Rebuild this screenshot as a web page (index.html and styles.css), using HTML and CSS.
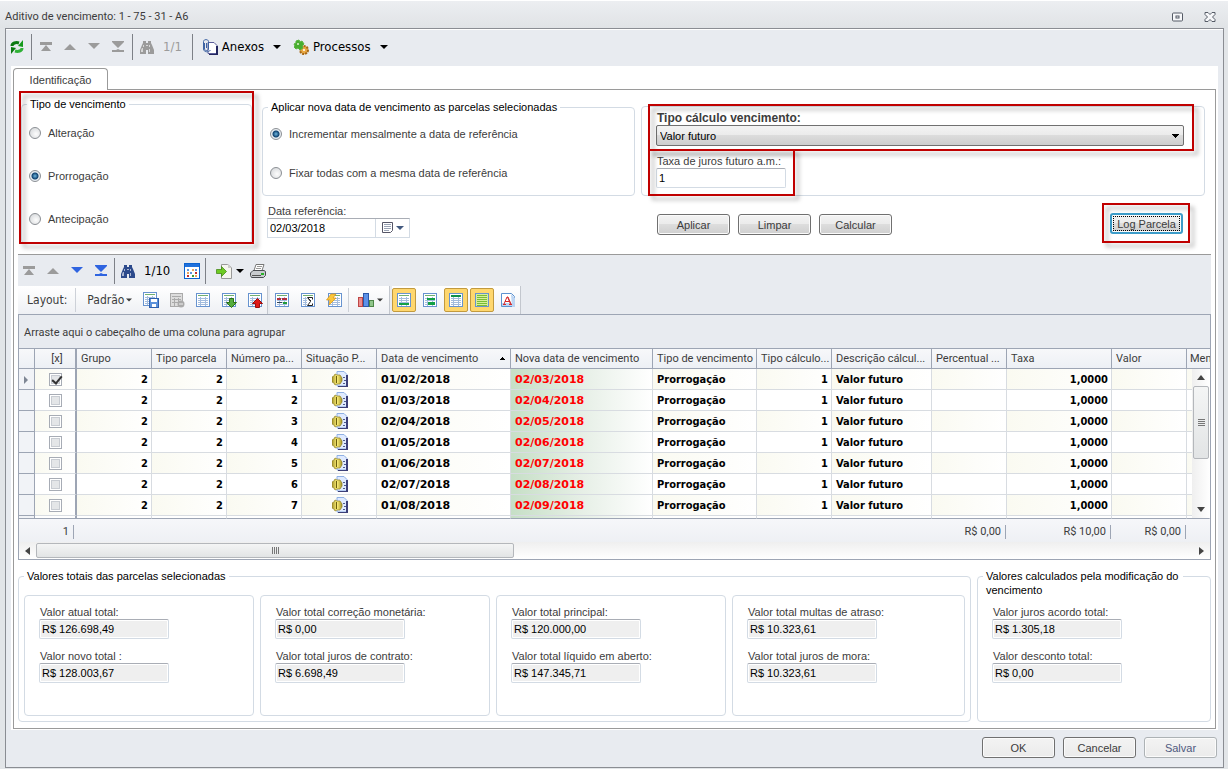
FILE: index.html
```html
<!DOCTYPE html>
<html lang="pt-BR">
<head>
  <meta charset="UTF-8">
  <meta name="viewport" content="width=device-width, initial-scale=1.0">
  <title>Aditivo de vencimento</title>
  <link rel="stylesheet" href="styles.css">
</head>
<body>

<!-- Ícones -->
<svg class="sprite" aria-hidden="true">
  <defs>
    <linearGradient id="goldGrad" x1="0" y1="0" x2="1" y2="0"><stop offset="0" stop-color="#a3922a"/><stop offset=".5" stop-color="#fff27a"/><stop offset="1" stop-color="#a3922a"/></linearGradient>
  </defs>
  <symbol id="i-first" viewBox="0 0 16 16"><path fill="currentColor" d="M2 3h12v3H2zM8 6l5 6H3z"/></symbol>
  <symbol id="i-up" viewBox="0 0 16 16"><path fill="currentColor" d="M8 5l6 6H2z"/></symbol>
  <symbol id="i-down" viewBox="0 0 16 16"><path fill="currentColor" d="M2 4h12L8 10z"/></symbol>
  <symbol id="i-last" viewBox="0 0 16 16"><path fill="currentColor" d="M2 2h12v1l-6 6-6-6zM2 11h4l2-1 2 1h4v2H2z"/></symbol>
  <symbol id="i-caret" viewBox="0 0 8 8"><path fill="currentColor" d="M0 2h8L4 6z"/></symbol>
  <symbol id="i-find" viewBox="0 0 16 16">
    <path fill="currentColor" d="M4 2h3v2h2V2h3v2l1 2 2 5v4H9v-4H7v4H1v-4l2-5 1-2z"/>
    <path fill="#fff" opacity=".6" d="M4 6h1v2H4zM3 9h1v4H2v-2zM10 6h1v2h-1zM10 10h1v3h-1zM7 6h2v1H7z"/>
  </symbol>
  <symbol id="i-refresh" viewBox="0 0 16 16">
    <path fill="none" stroke="#0c7a12" stroke-width="3" d="M3 7c0-3 4-4 7-3"/><path fill="#159a1c" d="M9 7l5-6v7z"/>
    <path fill="none" stroke="#2fb136" stroke-width="3" d="M13 9c0 3-4 4-7 3"/><path fill="#0c7a12" d="M7 9l-5 6V8z"/>
  </symbol>
  <symbol id="i-attach" viewBox="0 0 16 16">
    <path fill="#fff" stroke="#5b5e9a" d="M6 3.500h6l3 3v8H6z"/><path fill="#23265f" d="M14 7h2v9H7v-1h7z"/>
    <path fill="none" stroke="#3f64a3" d="M2.500 4v6c0 2 4 2 4 0V2.500c0-2.500-5-2.500-5 0V10c0 3 5 4 7 1M4.500 4v5"/>
  </symbol>
  <symbol id="i-process" viewBox="0 0 16 16">
    <circle cx="11" cy="11" r="4" fill="#e9a843" stroke="#a76715" stroke-width="2" stroke-dasharray="2 1"/>
    <circle cx="11" cy="11" r="1" fill="#fff"/>
    <path fill="#47ad2f" stroke="#59b53d" d="M1 5l2-1 0-2 3-1 1 2 2-1 2 3-2 2 1 2-3 2-2-2-2 1-2-2 1-1z"/><circle cx="5" cy="5" r="1" fill="#dff6ce"/>
  </symbol>
  <symbol id="i-cols" viewBox="0 0 16 16">
    <rect x=".5" y=".5" width="15" height="15" fill="#fff" stroke="#0b62cf"/><path fill="#1f70dc" d="M1 1h14v3H1z"/>
    <path fill="#5c96de" d="M3 6h2v2H3zM11 6h2v2h-2zM6 9h2v2H6z"/><path fill="#e9a25d" d="M8 6h2v2H8zM3 9h2v2H3zM11 12h2v2h-2z"/><path fill="#3d9b35" d="M8 12h2v2H8z"/><path fill="#c12f2f" d="M3 12h2v2H3zM11 9h2v2h-2z"/>
  </symbol>
  <symbol id="i-export" viewBox="0 0 16 16">
    <path fill="#f6f6f0" stroke="#999" d="M5.500 1.500h6l4 3v11h-10z"/><path fill="#ccc" d="M12 1v4h4z"/>
    <path fill="#6ecb22" stroke="#39800d" stroke-width=".7" d="M.5 6.500h5V3.500l5 5-5 5v-3h-5z"/>
  </symbol>
  <symbol id="i-print" viewBox="0 0 16 16">
    <path fill="#fff" stroke="#777" d="M6 1.500l8 0-2 6H4z"/><path stroke="#999" d="M7 3.500h5M6 5.500h5"/>
    <path fill="#c9ccd0" stroke="#4a4d52" d="M3 7.500h11l1.500 1v4l-2 2h-12l-1-2V10z"/><path fill="#555" d="M2 12h9v1H2z"/><path fill="#29b329" d="M11 10h3v2h-3z"/>
  </symbol>
  <symbol id="i-sheet" viewBox="0 0 16 16">
    <rect x="1.500" y="1.500" width="13" height="13" fill="#fff" stroke="#6793cf"/><path stroke="#71b070" d="M3 3.500h10"/>
    <path stroke="#a3bcdd" fill="none" d="M3 6.500h10M3 8.500h10M3 10.500h10M3 12.500h10M5.500 5v9M10.500 5v9"/>
  </symbol>
  <symbol id="i-save" viewBox="0 0 16 16"><use href="#i-sheet" x="-1" y="-1"/><rect x="6.500" y="6.500" width="9" height="9" fill="#5c92dc" stroke="#2e5fae"/><path fill="#fff" d="M8 7h6v3H8zM9 12h4v3H9z"/></symbol>
  <symbol id="i-del" viewBox="0 0 16 16"><rect x="1.500" y="1.500" width="12" height="13" fill="#ddd" stroke="#aaa"/><path stroke="#aaa" d="M3 4.500h9M3 7.500h9M3 10.500h9M5.500 6v8M9.500 6v8"/><circle cx="12" cy="12" r="3.500" fill="#aaa"/><path stroke="#eee" d="M10 12h4"/></symbol>
  <symbol id="i-load" viewBox="0 0 16 16"><use href="#i-sheet"/><path fill="#55ad3d" stroke="#2b7018" d="M8.500 6.500h4v4h3l-5 5-5-5h3z"/></symbol>
  <symbol id="i-send" viewBox="0 0 16 16"><use href="#i-sheet"/><path fill="#e01919" stroke="#9b0c0c" d="M8.500 15.500h4v-4h3l-5-5-5 5h3z"/></symbol>
  <symbol id="i-cond" viewBox="0 0 16 16"><use href="#i-sheet"/><path stroke="#b22f3d" stroke-width="2" d="M3 7h4M8 7h5"/><path stroke="#219a39" stroke-width="2" d="M9 11h4"/><path stroke="#345" d="M3 10.500h5"/></symbol>
  <symbol id="i-sum" viewBox="0 0 16 16"><use href="#i-sheet"/><path fill="#fff" d="M7 6h6v7H7z"/><path fill="none" stroke="#222" d="M12.500 7.500v-2h-5l3 4-3 4h5v-2M8 6l3 3"/></symbol>
  <symbol id="i-flash" viewBox="0 0 16 16"><use href="#i-sheet" x="1"/><path fill="#fbc73d" stroke="#d89313" stroke-width=".7" d="M5 2h5L7 6h3l-7 7 1-5H.5z"/></symbol>
  <symbol id="i-chart" viewBox="0 0 16 16"><rect x=".5" y="5.500" width="4" height="9" fill="#ec8d8d" stroke="#bd4646"/><rect x="5.500" y="1.500" width="5" height="13" fill="#5d92e8" stroke="#2b58a8"/><rect x="11.500" y="8.500" width="4" height="6" fill="#8fc68b" stroke="#4c8547"/></symbol>
  <symbol id="i-foot" viewBox="0 0 16 16"><use href="#i-sheet"/><path fill="#12a045" d="M3 11h10v2H3z"/></symbol>
  <symbol id="i-group" viewBox="0 0 16 16"><use href="#i-sheet"/><path fill="#12a045" d="M5 6h8v2H5zM6 10h7v3H6z"/></symbol>
  <symbol id="i-head" viewBox="0 0 16 16"><use href="#i-sheet"/><path fill="#12904a" d="M3 3h10v2H3z"/></symbol>
  <symbol id="i-zebra" viewBox="0 0 16 16"><rect x="1.500" y="1.500" width="13" height="13" fill="#d7ee9b" stroke="#6793cf"/><path stroke="#78bd36" d="M3 3.500h10M3 5.500h10M3 7.500h10M3 9.500h10M3 11.500h10M3 13.500h10"/></symbol>
  <symbol id="i-font" viewBox="0 0 16 16"><path fill="#fff" stroke="#5d92cf" d="M1.500 1.500h10l3 3v10h-13z"/><path fill="#bcd4f2" d="M2 11h12v3H2zM11 2l4 4v9h-3z"/><path fill="none" stroke="#d62a2a" d="M4 12l3-7h1l3 7M7.500 5l3 7M5 9.500h5M3 12.500h3M9 12.500h3"/></symbol>
  <symbol id="i-status" viewBox="0 0 16 16">
    <path fill="#dfeaff" stroke="#8fb0e4" d="M5 .5h7l3 3V15H5z"/><path fill="#3c3f78" d="M14 4h2v12H6v-1h8z"/><path stroke="#4c5a8c" d="M11 6.500h2M12 9.500h2M11 12.500h2"/>
    <path fill="url(#goldGrad)" stroke="#8f7f22" stroke-width=".7" d="M0 6l2-1 1-2 2 1h3l2 3v3l-2 3H5l-2 1-1-2-2-1z"/><path stroke="#6a5d0c" d="M4.500 5v7"/>
  </symbol>
  <symbol id="i-cal" viewBox="0 0 12 12"><path fill="#fff" stroke="#556" d="M.5.500h10v8l-2 2h-8z"/><path stroke="#9aa3b5" d="M2 2.500h7M2 4.500h7M2 6.500h7M2 8.500h5"/></symbol>
</svg>

<div class="window">
  <header class="titlebar">
    <span class="title">Aditivo de vencimento: 1 - 75 - 31 - A6</span>
    <button class="win-btn" aria-label="Maximizar"><svg width="12" height="10"><rect x=".5" y="1" width="10" height="8" rx="1" fill="#f6f7f9" stroke="#555b66"/><rect x="4" y="4" width="3" height="2" fill="none" stroke="#555b66"/></svg></button>
    <button class="win-btn" aria-label="Fechar"><svg width="12" height="10"><path fill="#f6f7f9" stroke="#555b66" d="M1 .5h3l2 2 2-2h3v2L8.500 5 11 7.500v2H8l-2-2-2 2H1v-2L3.500 5 1 2.500z"/></svg></button>
  </header>

  <div class="frame">
    <div class="toolbar main-tools">
      <button class="tool" aria-label="Atualizar"><svg><use href="#i-refresh"/></svg></button>
      <span class="sep"></span>
      <button class="tool off" aria-label="Primeiro"><svg><use href="#i-first"/></svg></button>
      <button class="tool off" aria-label="Anterior"><svg><use href="#i-up"/></svg></button>
      <button class="tool off" aria-label="Próximo"><svg><use href="#i-down"/></svg></button>
      <button class="tool off" aria-label="Último"><svg><use href="#i-last"/></svg></button>
      <span class="sep"></span>
      <button class="tool off" aria-label="Localizar"><svg><use href="#i-find"/></svg></button>
      <span class="counter off">1/1</span>
      <span class="sep"></span>
      <button class="tool-text"><svg><use href="#i-attach"/></svg>Anexos<svg class="caret"><use href="#i-caret"/></svg></button>
      <button class="tool-text"><svg><use href="#i-process"/></svg>Processos<svg class="caret"><use href="#i-caret"/></svg></button>
    </div>

    <main class="page">
      <div class="tabs"><button class="tab">Identificação</button></div>
      <div class="panel">

        <div class="form">
          <div class="marked kind">
            <fieldset class="group">
              <legend>Tipo de vencimento</legend>
              <label class="radio"><input type="radio" name="tipo">Alteração</label>
              <label class="radio"><input type="radio" name="tipo" checked>Prorrogação</label>
              <label class="radio"><input type="radio" name="tipo">Antecipação</label>
            </fieldset>
            <span class="mark"></span>
          </div>

          <div class="apply">
            <fieldset class="group">
              <legend>Aplicar nova data de vencimento as parcelas selecionadas</legend>
              <label class="radio"><input type="radio" name="aplicar" checked>Incrementar mensalmente a data de referência</label>
              <label class="radio"><input type="radio" name="aplicar">Fixar todas com a mesma data de referência</label>
            </fieldset>
            <div class="date">
              <label for="dataRef">Data referência:</label>
              <div class="date-box">
                <input id="dataRef" type="text" value="02/03/2018">
                <button class="date-btn" aria-label="Calendário"><svg class="cal"><use href="#i-cal"/></svg><svg class="caret"><use href="#i-caret"/></svg></button>
              </div>
            </div>
          </div>

          <div class="calc">
            <div class="group calc-box">
              <div class="marked calc-type">
                <label for="tipoCalc">Tipo cálculo vencimento:</label>
                <select id="tipoCalc"><option>Valor futuro</option></select>
                <span class="mark"></span>
              </div>
              <div class="marked calc-rate">
                <label for="taxa">Taxa de juros futuro a.m.:</label>
                <input id="taxa" class="field" type="text" value="1">
                <span class="mark"></span>
              </div>
            </div>
            <div class="actions">
              <button class="btn">Aplicar</button>
              <button class="btn">Limpar</button>
              <button class="btn">Calcular</button>
              <div class="marked log">
                <button class="btn focused">Log Parcela</button>
                <span class="mark"></span>
              </div>
            </div>
          </div>
        </div>

        <section class="grid">
          <div class="toolbar nav-tools">
            <button class="tool off" aria-label="Primeiro"><svg><use href="#i-first"/></svg></button>
            <button class="tool off" aria-label="Anterior"><svg><use href="#i-up"/></svg></button>
            <button class="tool blue" aria-label="Próximo"><svg><use href="#i-down"/></svg></button>
            <button class="tool blue" aria-label="Último"><svg><use href="#i-last"/></svg></button>
            <span class="sep"></span>
            <button class="tool navy" aria-label="Localizar"><svg><use href="#i-find"/></svg></button>
            <span class="counter">1/10</span>
            <button class="tool" aria-label="Colunas"><svg><use href="#i-cols"/></svg></button>
            <span class="sep"></span>
            <button class="tool-drop" aria-label="Exportar"><svg><use href="#i-export"/></svg><svg class="caret"><use href="#i-caret"/></svg></button>
            <button class="tool" aria-label="Imprimir"><svg><use href="#i-print"/></svg></button>
          </div>

          <div class="layout-tools">
            <div class="strip">
              <span class="strip-label">Layout:</span>
              <span class="thin-sep"></span>
              <button class="strip-drop">Padrão<svg class="caret"><use href="#i-caret"/></svg></button>
              <button class="pick" aria-label="Salvar layout"><svg><use href="#i-save"/></svg></button>
              <button class="pick" aria-label="Excluir layout"><svg><use href="#i-del"/></svg></button>
              <button class="pick" aria-label="Layout original"><svg><use href="#i-sheet"/></svg></button>
              <button class="pick" aria-label="Importar layout"><svg><use href="#i-load"/></svg></button>
              <button class="pick" aria-label="Exportar layout"><svg><use href="#i-send"/></svg></button>
            </div>
            <div class="strip">
              <button class="pick" aria-label="Formatação condicional"><svg><use href="#i-cond"/></svg></button>
              <button class="pick" aria-label="Sumário"><svg><use href="#i-sum"/></svg></button>
              <button class="pick" aria-label="Filtro rápido"><svg><use href="#i-flash"/></svg></button>
              <span class="thin-sep"></span>
              <button class="pick wide" aria-label="Gráfico"><svg><use href="#i-chart"/></svg><svg class="caret"><use href="#i-caret"/></svg></button>
            </div>
            <div class="strip">
              <button class="pick on" aria-label="Rodapé"><svg><use href="#i-foot"/></svg></button>
              <button class="pick" aria-label="Rodapé de grupo"><svg><use href="#i-group"/></svg></button>
              <button class="pick on" aria-label="Cabeçalho"><svg><use href="#i-head"/></svg></button>
              <button class="pick on" aria-label="Zebrado"><svg><use href="#i-zebra"/></svg></button>
              <button class="pick" aria-label="Fonte"><svg><use href="#i-font"/></svg></button>
            </div>
          </div>

          <div class="grid-box">
            <div class="group-hint">Arraste aqui o cabeçalho de uma coluna para agrupar</div>
            <div class="grid-view">
              <table>
                <colgroup>
                  <col class="w-ind"><col class="w-chk"><col class="w75"><col class="w75"><col class="w75"><col class="w75">
                  <col class="w-date"><col class="w-new"><col class="w-tipo"><col class="w75"><col class="w-desc"><col class="w75">
                  <col class="w-taxa"><col class="w75"><col>
                </colgroup>
                <thead>
                  <tr>
                    <th></th><th class="c">[x]</th><th>Grupo</th><th>Tipo parcela</th><th>Número pa...</th><th>Situação P...</th>
                    <th class="sorted">Data de vencimento</th><th>Nova data de vencimento</th><th>Tipo de vencimento</th><th>Tipo cálculo...</th>
                    <th>Descrição cálcul...</th><th>Percentual ...</th><th>Taxa</th><th>Valor</th><th class="cut">Mem</th>
                  </tr>
                </thead>
                <tbody>
                  <tr><td class="ind current"></td><td class="c"><input type="checkbox" aria-label="Selecionar" checked></td><td class="n">2</td><td class="n">2</td><td class="n">1</td><td class="c"><svg><use href="#i-status"/></svg></td><td class="date-cell">01/02/2018</td><td class="date-cell new">02/03/2018</td><td>Prorrogação</td><td class="n">1</td><td>Valor futuro</td><td></td><td class="n">1,0000</td><td></td><td></td></tr>
                  <tr><td class="ind"></td><td class="c"><input type="checkbox" aria-label="Selecionar"></td><td class="n">2</td><td class="n">2</td><td class="n">2</td><td class="c"><svg><use href="#i-status"/></svg></td><td class="date-cell">01/03/2018</td><td class="date-cell new">02/04/2018</td><td>Prorrogação</td><td class="n">1</td><td>Valor futuro</td><td></td><td class="n">1,0000</td><td></td><td></td></tr>
                  <tr><td class="ind"></td><td class="c"><input type="checkbox" aria-label="Selecionar"></td><td class="n">2</td><td class="n">2</td><td class="n">3</td><td class="c"><svg><use href="#i-status"/></svg></td><td class="date-cell">02/04/2018</td><td class="date-cell new">02/05/2018</td><td>Prorrogação</td><td class="n">1</td><td>Valor futuro</td><td></td><td class="n">1,0000</td><td></td><td></td></tr>
                  <tr><td class="ind"></td><td class="c"><input type="checkbox" aria-label="Selecionar"></td><td class="n">2</td><td class="n">2</td><td class="n">4</td><td class="c"><svg><use href="#i-status"/></svg></td><td class="date-cell">01/05/2018</td><td class="date-cell new">02/06/2018</td><td>Prorrogação</td><td class="n">1</td><td>Valor futuro</td><td></td><td class="n">1,0000</td><td></td><td></td></tr>
                  <tr><td class="ind"></td><td class="c"><input type="checkbox" aria-label="Selecionar"></td><td class="n">2</td><td class="n">2</td><td class="n">5</td><td class="c"><svg><use href="#i-status"/></svg></td><td class="date-cell">01/06/2018</td><td class="date-cell new">02/07/2018</td><td>Prorrogação</td><td class="n">1</td><td>Valor futuro</td><td></td><td class="n">1,0000</td><td></td><td></td></tr>
                  <tr><td class="ind"></td><td class="c"><input type="checkbox" aria-label="Selecionar"></td><td class="n">2</td><td class="n">2</td><td class="n">6</td><td class="c"><svg><use href="#i-status"/></svg></td><td class="date-cell">02/07/2018</td><td class="date-cell new">02/08/2018</td><td>Prorrogação</td><td class="n">1</td><td>Valor futuro</td><td></td><td class="n">1,0000</td><td></td><td></td></tr>
                  <tr><td class="ind"></td><td class="c"><input type="checkbox" aria-label="Selecionar"></td><td class="n">2</td><td class="n">2</td><td class="n">7</td><td class="c"><svg><use href="#i-status"/></svg></td><td class="date-cell">01/08/2018</td><td class="date-cell new">02/09/2018</td><td>Prorrogação</td><td class="n">1</td><td>Valor futuro</td><td></td><td class="n">1,0000</td><td></td><td></td></tr>
                  <tr class="peek"><td class="ind"></td><td></td><td></td><td></td><td></td><td></td><td></td><td class="new"></td><td></td><td></td><td></td><td></td><td></td><td></td><td></td></tr>
                </tbody>
                <tfoot>
                  <tr><td></td><td class="count"><span class="total">1</span></td><td colspan="9"></td><td><span class="total">R$ 0,00</span></td><td><span class="total">R$ 10,00</span></td><td><span class="total">R$ 0,00</span></td><td></td></tr>
                </tfoot>
              </table>
              <div class="vscroll">
                <span class="arrow up"></span><span class="thumb"></span><span class="arrow down"></span>
              </div>
            </div>
            <div class="hscroll">
              <span class="arrow left"></span><span class="thumb"></span><span class="arrow right"></span>
            </div>
          </div>
        </section>

        <div class="totals">
          <fieldset class="group selected">
            <legend>Valores totais das parcelas selecionadas</legend>
            <div class="cards">
              <div class="group card">
                <label for="v1">Valor atual total:</label><input id="v1" class="field" type="text" value="R$ 126.698,49" readonly>
                <label for="v2">Valor novo total :</label><input id="v2" class="field" type="text" value="R$ 128.003,67" readonly>
              </div>
              <div class="group card">
                <label for="v3">Valor total correção monetária:</label><input id="v3" class="field" type="text" value="R$ 0,00" readonly>
                <label for="v4">Valor total juros de contrato:</label><input id="v4" class="field" type="text" value="R$ 6.698,49" readonly>
              </div>
              <div class="group card">
                <label for="v5">Valor total principal:</label><input id="v5" class="field" type="text" value="R$ 120.000,00" readonly>
                <label for="v6">Valor total líquido em aberto:</label><input id="v6" class="field" type="text" value="R$ 147.345,71" readonly>
              </div>
              <div class="group card">
                <label for="v7">Valor total multas de atraso:</label><input id="v7" class="field" type="text" value="R$ 10.323,61" readonly>
                <label for="v8">Valor total juros de mora:</label><input id="v8" class="field" type="text" value="R$ 10.323,61" readonly>
              </div>
            </div>
          </fieldset>
          <fieldset class="group computed">
            <legend>Valores calculados pela modificação do vencimento</legend>
            <div class="card">
              <label for="v9">Valor juros acordo total:</label><input id="v9" class="field" type="text" value="R$ 1.305,18" readonly>
              <label for="v10">Valor desconto total:</label><input id="v10" class="field" type="text" value="R$ 0,00" readonly>
            </div>
          </fieldset>
        </div>

      </div>
    </main>

    <footer class="footer">
      <button class="btn">OK</button>
      <button class="btn">Cancelar</button>
      <button class="btn" disabled>Salvar</button>
    </footer>
  </div>
</div>

</body>
</html>
```
FILE: styles.css
```css
* {
  box-sizing: border-box;
}
body {
  margin: 0;
  font-family: "Liberation Sans", Arial, sans-serif;
  font-size: 11px;
  line-height: 14px;
  color: #3c3c3c;
  background: #e2e5e8;
}
button, input, select {
  font: inherit;
  color: inherit;
}
button {
  padding: 0;
  border: 0;
  background: none;
}
svg {
  width: 16px;
  height: 16px;
  flex: none;
}
svg.caret {
  width: 8px;
  height: 8px;
}
.sprite {
  position: absolute;
  width: 0;
  height: 0;
}

/* Window */
.window {
  min-height: 100vh;
  display: flex;
  flex-direction: column;
  padding: 0 4px 1px 5px;
}
.titlebar {
  display: flex;
  align-items: center;
  gap: 20px;
  height: 28px;
  margin: 0 -4px 0 -5px;
  padding: 4px 12px 0 5px;
  border-top: 1px solid #fff;
  background: linear-gradient(#eceef1, #e0e3e6);
  font-family: Roboto, sans-serif;
}
.title {
  flex: 1;
}
.win-btn {
  height: 10px;
  line-height: 0;
}
.win-btn svg {
  width: 12px;
  height: 10px;
}
.frame {
  flex: 1;
  display: flex;
  flex-direction: column;
  padding: 0 5px;
  border: 1px solid #8a8d93;
  background: #e8ebf0;
}

/* Toolbars */
.toolbar {
  display: flex;
  align-items: center;
  font-family: "DejaVu Sans Condensed", "DejaVu Sans", sans-serif;
  font-size: 13px;
  color: #000;
}
.main-tools {
  height: 37px;
  margin: 0 -5px;
  padding: 0 0 3px 1px;
  border-top: 1px solid #fff;
}
.nav-tools {
  height: 31px;
  margin-left: -1px;
}
.tool {
  width: 24px;
  height: 24px;
  display: flex;
  align-items: center;
  justify-content: center;
}
.main-tools .tool:first-child {
  width: 22px;
  padding-right: 2px;
}
.off {
  color: #9b9b9b;
}
.blue {
  color: #2f64e0;
}
.navy {
  color: #2c4a8c;
}
.sep {
  width: 1px;
  height: 26px;
  margin: 0 1px;
  background: #7d8087;
}
.main-tools .sep {
  margin: 0 2px;
}
.counter {
  padding: 0 8px 0 4px;
}
.nav-tools .counter {
  padding-right: 10px;
}
.tool-text, .tool-drop {
  display: flex;
  align-items: center;
  gap: 4px;
  height: 24px;
  padding: 0 5px 0 7px;
}
.tool-drop {
  padding: 0 2px 0 9px;
}
.tool-text .caret {
  margin-left: 5px;
}
.layout-tools {
  display: flex;
  gap: 2px;
  height: 28px;
  font-family: "DejaVu Sans Condensed", "DejaVu Sans", sans-serif;
  font-size: 12px;
}
.strip {
  display: flex;
  align-items: center;
  gap: 2px;
  background: linear-gradient(#fff, #eef0f4);
  border-right: 1px solid #c3c7ce;
}
.strip-label {
  padding: 0 6px 0 9px;
}
.strip-drop {
  display: flex;
  align-items: center;
  gap: 2px;
  padding: 0 5px 0 8px;
}
.strip-drop .caret {
  width: 6px;
}
.thin-sep {
  width: 1px;
  height: 24px;
  margin-right: 1px;
  background: #cdd1d8;
}
.pick {
  width: 24px;
  height: 24px;
  display: flex;
  align-items: center;
  justify-content: center;
  border: 1px solid transparent;
  border-radius: 2px;
}
.pick.wide {
  width: 37px;
}
.pick.wide .caret {
  width: 6px;
  margin-left: 3px;
}
.pick.on {
  border-color: #c29a3e;
  background: #ffd76e;
}

/* Page and tab */
.page {
  padding: 2px 2px 1px;
  background: #fff;
}
.tabs {
  display: flex;
}
.tab {
  position: relative;
  height: 22px;
  width: 95px;
  margin-bottom: -1px;
  border: 1px solid #9a9a9a;
  border-bottom: 0;
  border-radius: 4px 4px 0 0;
  background: #fff;
}
.panel {
  padding: 0 4px 6px;
  border: 1px solid #9a9a9a;
}

/* Group boxes */
.group {
  min-width: 0;
  margin: 0;
  padding: 0;
  border: 1px solid #d3dbe4;
  border-radius: 4px;
}
legend {
  margin-left: 5px;
  padding: 0 3px;
  color: #000;
}
.radio {
  display: flex;
  align-items: center;
  gap: 7px;
}
.radio input {
  appearance: none;
  width: 12px;
  height: 12px;
  margin: 0;
  border: 1px solid #8b8f94;
  border-radius: 50%;
  background: radial-gradient(circle at 60% 60%, #fdfdfd, #cfd2d5);
}
.radio input:checked {
  background: radial-gradient(circle, #6fb7e0 0, #0f4270 3px, #e8edf2 4px);
}

/* Red outlines round the highlighted areas */
.marked {
  position: relative;
}
.mark {
  position: absolute;
  inset: 0;
  border: 2px solid #c00000;
  filter: drop-shadow(4px 4px 2px rgba(0, 0, 0, .3));
  pointer-events: none;
}

/* Form */
.form {
  display: flex;
  height: 164px;
  padding-left: 1px;
}
.kind {
  width: 235px;
  margin-right: 8px;
}
.kind .group {
  height: 147px;
  margin: 7px 2px 0;
}
.kind .radio {
  margin: 0 0 29px 7px;
}
.kind legend + .radio {
  margin-top: 15px;
}
.kind .mark {
  inset: 1px 0 10px;
}
.apply {
  width: 373px;
  margin-right: 6px;
}
.apply .group {
  height: 96px;
  margin-top: 10px;
}
.apply .radio {
  margin: 0 0 25px 7px;
}
.apply legend + .radio {
  margin-top: 13px;
}
.date {
  padding: 8px 0 0 5px;
}
.date label {
  display: block;
  padding-left: 1px;
}
.date-box {
  display: flex;
  width: 143px;
  height: 20px;
  border: 1px solid #d3dbe4;
  border-top-color: #a9adb5;
}
.date-box input {
  width: 108px;
  padding: 0 2px;
  border: 0;
  border-right: 1px solid #d3dbe4;
  color: #000;
}
.date-btn {
  flex: 1;
  display: flex;
  align-items: center;
  justify-content: center;
  gap: 2px;
  color: #42597f;
}
.date-btn .cal {
  width: 12px;
  height: 12px;
}
.calc {
  flex: 1;
  padding-right: 6px;
}
.calc-box {
  height: 90px;
  margin-top: 16px;
  padding-left: 6px;
}
.calc-type {
  height: 45px;
  margin: -3px 10px 0 0;
  padding: 7px 10px 0 8px;
}
.calc-type label {
  display: block;
  padding-left: 1px;
  font-size: 12px;
  font-weight: bold;
}
.calc-type .mark {
  bottom: -2px;
}
select {
  appearance: none;
  display: block;
  width: 100%;
  height: 21px;
  padding: 0 3px;
  border: 1px solid #707070;
  border-radius: 2px;
  color: #000;
  background:
    linear-gradient(to right, #000 0 0) right 4px top 8px / 7px 1px no-repeat,
    linear-gradient(to right, #000 0 0) right 5px top 9px / 5px 1px no-repeat,
    linear-gradient(to right, #000 0 0) right 6px top 10px / 3px 1px no-repeat,
    linear-gradient(to right, #000 0 0) right 7px top 11px / 1px 1px no-repeat,
    linear-gradient(#f3f3f3, #ebebeb 50%, #dcdcdc 50%, #cdcdcd);
}
.calc-rate {
  width: 147px;
  height: 47px;
  padding: 5px 8px 0;
}
.calc-rate label {
  display: block;
  padding-left: 1px;
}
.field {
  display: block;
  width: 130px;
  height: 20px;
  padding: 0 2px;
  border: 1px solid #d3dbe4;
  border-top-color: #a9adb5;
  border-radius: 2px;
  color: #000;
}
.field[readonly] {
  background: #efefef;
  box-shadow: inset 0 0 0 1px #fff;
}
.actions {
  display: flex;
  align-items: flex-start;
  gap: 8px;
  padding: 18px 22px 0 16px;
}
.btn {
  width: 73px;
  height: 21px;
  border: 1px solid #707070;
  border-radius: 3px;
  background: linear-gradient(#f3f3f3, #ebebeb 50%, #dddddd 50%, #cfcfcf);
  box-shadow: inset 0 0 0 1px #fbfbfb;
}
.btn.focused {
  border: 2px solid #3c9cc9;
  outline: 1px dotted #000;
  outline-offset: -4px;
}
.footer .btn {
  background: linear-gradient(#f3f3f3, #ebebeb);
}
.btn:disabled {
  border-color: #adb2b5;
  color: #4f5a80;
}
.log {
  margin: -1px 0 0 auto;
}
.log .btn {
  display: block;
}
.log .mark {
  inset: -10px -7px -9px -8px;
}

/* Data grid */
.grid {
  border-top: 1px solid #9a9a9a;
  background: #e8ebf0;
}
.grid-box {
  border: 1px solid #9da5b4;
  font-family: Roboto, sans-serif;
}
.group-hint {
  padding: 11px 5px 8px;
}
.grid-view {
  position: relative;
}
table {
  width: 100%;
  table-layout: fixed;
  border-collapse: separate;
  border-spacing: 0;
}
.w-ind { width: 16px; }
.w-chk { width: 42px; }
.w75 { width: 75px; }
.w-date { width: 134px; }
.w-new { width: 142px; }
.w-tipo { width: 104px; }
.w-desc { width: 100px; }
.w-taxa { width: 105px; }
th, td {
  padding: 0 3px 0 4px;
  white-space: nowrap;
  text-align: left;
}
th {
  height: 21px;
  padding-right: 0;
  border: solid #9da5b4;
  border-width: 1px 1px 1px 0;
  background: linear-gradient(#f7f8fa, #edf0f5);
  font-weight: normal;
}
th.cut {
  padding-left: 3px;
  border-right: 0;
  overflow: hidden;
}
.sorted {
  background:
    conic-gradient(from 135deg at 50% 0, #000 90deg, transparent 0) right 5px center / 6px 3px no-repeat,
    linear-gradient(#f7f8fa, #edf0f5);
}
tbody td {
  height: 21px;
  padding-top: 2px;
  border: solid #d8dce1;
  border-width: 0 1px 1px 0;
  background: #fff;
  color: #000;
  font-family: "DejaVu Sans Condensed", "DejaVu Sans", sans-serif;
  font-weight: bold;
}
tbody td.date-cell {
  font-family: "DejaVu Sans", sans-serif;
}
tbody tr:nth-child(odd) td {
  background: linear-gradient(to right, #fafaf1, #fff);
}
tbody td.ind, tbody tr:nth-child(odd) td.ind {
  border-color: #9da5b4;
  background: #f1f3f7;
}
th:nth-child(2), tbody td:nth-child(2) {
  border-right: 2px solid #9da5b4;
}
.current::before {
  content: "";
  display: block;
  width: 4px;
  border: solid transparent;
  border-width: 4px 0 4px 4px;
  border-left-color: #7e8694;
  margin-left: 1px;
}
tbody td.new, tbody tr:nth-child(odd) td.new {
  color: #f00;
  background: linear-gradient(to right, #c6dfc6, #e6efe6 50%, #fff);
}
td.n {
  text-align: right;
}
td.c, th.c {
  padding-top: 0;
  text-align: center;
}
td svg, td input {
  display: block;
  margin: 0 auto;
}
td input {
  appearance: none;
  width: 13px;
  height: 13px;
  border: 1px solid #a7acb5;
  background: #e4e6e8;
  box-shadow: inset 0 0 0 1px #fff, inset 0 0 0 2px #c8ccd2;
}
td input:checked::before {
  content: "";
  display: block;
  width: 4px;
  height: 8px;
  margin: 0 0 0 4px;
  border: solid #333;
  border-width: 0 2px 2px 0;
  transform: rotate(40deg);
}
tbody tr.peek td, tbody tr.peek td.new {
  height: 3px;
  padding: 0;
  border-bottom-color: #9da5b4;
}
tfoot td {
  height: 23px;
  padding: 2px 1px 0 0;
  background: linear-gradient(#f6f7fa, #eef0f4);
  text-align: right;
}
tfoot td.count {
  padding-right: 3px;
}
.total {
  display: inline-block;
  padding-right: 4px;
  border-right: 1px solid #9da5b4;
}
.vscroll {
  position: absolute;
  top: 21px;
  right: 0;
  bottom: 24px;
  width: 18px;
  padding: 6px 1px;
  display: flex;
  flex-direction: column;
  align-items: center;
  background: linear-gradient(to right, #efefef, #fff);
}
.thumb {
  display: flex;
  align-items: center;
  justify-content: center;
  border: 1px solid #b4b7bb;
  border-radius: 2px;
  background: linear-gradient(#f4f5f5, #e2e4e5);
}
.vscroll .thumb {
  width: 16px;
  height: 73px;
  margin: 6px 0 auto;
}
.thumb::before {
  content: "";
}
.vscroll .thumb::before {
  width: 7px;
  height: 7px;
  background: repeating-linear-gradient(#777 0 1px, transparent 1px 2px);
}
.hscroll {
  display: flex;
  align-items: center;
  height: 17px;
  padding: 0 6px;
  background: linear-gradient(#efefef, #fff);
}
.hscroll .thumb {
  width: 478px;
  height: 15px;
  margin: 0 auto 0 6px;
}
.hscroll .thumb::before {
  width: 7px;
  height: 7px;
  background: repeating-linear-gradient(to right, #777 0 1px, transparent 1px 2px);
}
.arrow {
  border: 4px solid transparent;
}
.arrow.up {
  border-top: 0;
  border-bottom: 5px solid #444;
}
.arrow.down {
  border-bottom: 0;
  border-top: 5px solid #444;
}
.arrow.left {
  border-left: 0;
  border-right: 5px solid #444;
}
.arrow.right {
  border-right: 0;
  border-left: 5px solid #444;
}

/* Totals */
.totals {
  display: flex;
  gap: 6px;
  padding-top: 9px;
}
.selected {
  flex: 1;
}
.cards {
  display: grid;
  grid-template-columns: repeat(3, 1fr) 233px;
  gap: 6px;
  padding: 12px 5px 5px;
}
.card {
  height: 121px;
  padding: 9px 14px;
}
.card label {
  display: block;
  padding-left: 1px;
}
.card .field + label {
  margin-top: 10px;
}
.computed {
  width: 234px;
}
.computed legend {
  width: 200px;
  height: 14px;
}
.computed .card {
  padding-top: 22px;
}

/* Footer */
.footer {
  display: flex;
  justify-content: flex-end;
  gap: 8px;
  padding: 7px 1px;
}
```
